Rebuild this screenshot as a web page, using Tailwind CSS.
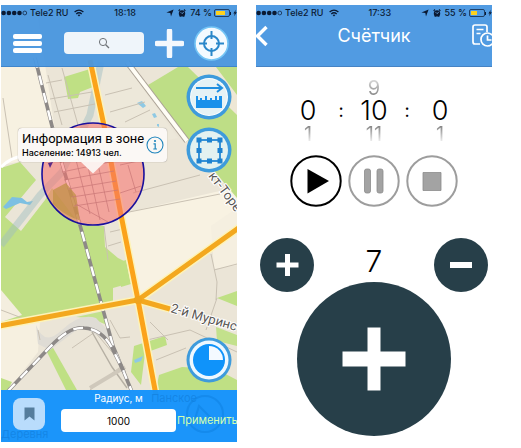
<!DOCTYPE html>
<html lang="ru">
<head>
<meta charset="utf-8">
<meta name="viewport" content="width=device-width, initial-scale=1">
<title>Счётчик</title>
<script src="https://cdn.jsdelivr.net/npm/@tailwindcss/browser@4"></script>
</head>
<body class="bg-white font-[Inter,Roboto,sans-serif] text-black">
<svg class="hidden" aria-hidden="true">
  <symbol id="dots" viewBox="0 0 27 8">
    <g fill="#0b1a33"><circle cx="2.6" cy="4" r="2.3"/><circle cx="7.9" cy="4" r="2.3"/><circle cx="13.2" cy="4" r="2.3"/><circle cx="18.5" cy="4" r="2.3"/></g>
    <circle cx="23.8" cy="4" r="1.9" fill="none" stroke="#0b1a33" stroke-width=".7"/>
  </symbol>
  <symbol id="wifi" viewBox="0 0 10 8">
    <g fill="none" stroke="#0b1a33" stroke-width="1.3"><path d="M.6 3.1Q5-.9 9.4 3.1"/><path d="M2.3 4.9Q5 2.5 7.7 4.9"/></g>
    <path d="M3.6 6.1Q5 5.1 6.4 6.1L5 7.6Z" fill="#0b1a33"/>
  </symbol>
  <symbol id="arrow" viewBox="0 0 8 8"><path d="M7.6.4 5 7.6 4.3 3.9.4 3.4Z" fill="#0b1a33"/></symbol>
  <symbol id="alarm" viewBox="0 0 8 8">
    <circle cx="4" cy="4.4" r="3.2" fill="#0b1a33"/><path d="M.6 1.8 2 .5M7.4 1.8 6 .5M1.8 7.6l.8-1M6.2 7.6l-.8-1" stroke="#0b1a33" stroke-width="1.1"/>
    <path d="M2.6 3.2 4 4.6l1.8-1.4" fill="none" stroke="#6aaae8" stroke-width=".8"/>
  </symbol>
  <symbol id="bolt" viewBox="0 0 5 8"><path d="M3.6 0 .4 4.5h1.8L1.4 8 4.8 3.2H2.9Z" fill="#0b1a33"/></symbol>
</svg>

<main class="grid min-h-screen grid-cols-2 gap-[19px] pt-[5px] pr-[29px] pb-[6px] pl-px">

  <section class="relative flex flex-col overflow-hidden" aria-label="Карта">
    <svg class="absolute inset-0 size-full" viewBox="1 5 236 437" preserveAspectRatio="xMidYMid slice" aria-hidden="true">
      <rect x="1" y="5" width="236" height="437" fill="#ebe5d7"/>
      <path d="M1 5H36L58 150 40 158 1 165Z" fill="#f7f1e1"/>
      <path d="M124 213 237 187V232L139 298Z" fill="#f8f2e2"/>
      <path d="M1 328 40 322 38 352 10 388H1Z" fill="#f6f0e0"/>
      <path d="M98 67H128L178 138 144 145 108 150Z" fill="#ede8da"/>
      <path d="M211 226 237 208V265L214 269Z" fill="#f5efe0"/>
      <path d="M1 168 20 162 36 180 30 187 5 217 21 231 45 200 52 188 80 225 104 226 105 247 118 258 126 262 127 284 113 288 113 303 1 324Z" fill="#c0df85"/>
      <path d="M1 290 22 315 1 322Z" fill="#f4eedf"/>
      <path d="M64 77 90 69 93 87 80 92 78 98 68 99Z" fill="#bfe084"/>
      <path d="M148 85 178 67H237V198L210 166 187 139Z" fill="#bede86"/>
      <path d="M188 67H216L237 95V115Z" fill="#eee7d5"/>
      <path d="M120 262 126 260 131 284 121 287Z" fill="#bfe084"/>
      <path d="M217 298 237 291V306Z" fill="#bfe084"/>
      <path d="M216 327 237 335V346L217 341Z" fill="#c3e18c"/>
      <path d="M134 346 165 336 167 345 145 353 141 385 131 372Z" fill="#bfe084"/>
      <path d="M159 375 182 367 216 369 237 380V390H156Z" fill="#bfe084"/>
      <path d="M46 350 52 346 77 390H66Z" fill="#bfe084"/>
      <path d="M1 378 12 382 8 390H1Z" fill="#bfe084"/>
      <path d="M76 317 104 311 107 325 90 318Z" fill="#c3e18c"/>
      <path d="M36 325Q44 347 62 330T96 318L112 335 104 340 82 326 50 350 38 344Z" fill="#dfdcd5"/>
      <path d="M3 207 12 197 22 198 27 202 33 201 30 205 20 203 6 209Z" fill="#7dc0e2"/>
      <path d="M137 103l5-2 4 5-3 2ZM152 114l3-1 2 4-3 1ZM134 360l9-4-2 5-6 2ZM157 124l2 0 0 3-2-1Z" fill="#8fc9e4"/>
      <path d="M1 245 40 195 62 172 90 115 101 62" fill="none" stroke="#9dbcc2" stroke-opacity=".45" stroke-width="7"/>
      <g fill="none" stroke="#c9c1b3" stroke-width="1">
        <path d="M48 75 62 125M62 68 78 125M50 99 92 92M46 83 62 80M54 112 95 104M3 98 12 158M110 112 145 102M125 122 150 110M105 95 132 88"/>
        <path d="M124 213 220 194M133 193 200 175M211 254 217 282 216 300M214 270 237 264M217 298 206 330M104 226 108 260M108 246 121 242M110 232 123 229"/>
        <path d="M147 340 190 330 237 352M156 360 186 348M150 322 168 340M110 320 120 338 130 337M38 330 40 340M1 310 22 318M72 348 95 332 123 365 90 390"/>
      </g>
      <path d="M92 332 112 367 127 388" fill="none" stroke="#b6b0a4" stroke-width="1.4"/>
      <path d="M90 388 125 367" stroke="#cfc8bb" stroke-width="4"/>
      <path d="M127 62 187 141" fill="none" stroke="#aaa195" stroke-width="6"/>
      <path d="M127 62 187 141" fill="none" stroke="#fffdf5" stroke-width="4"/>
      <path d="M1 167Q10 158 22 156L48 155" fill="none" stroke="#fff" stroke-width="3"/>
      <g fill="none">
        <path d="M35 58 48 110 58 150 80 225 102 306 113 346 132 392" stroke="#8d8987" stroke-width="3.6"/>
        <path d="M35 58 48 110 58 150 80 225 102 306 113 346 132 392" stroke="#fff" stroke-width="2.4" stroke-dasharray="10 8"/>
        <path d="M8 391 50 347Q70 326 84 328 102 329 112 348L124 372" stroke="#8d8987" stroke-width="3.6"/>
        <path d="M8 391 50 347Q70 326 84 328 102 329 112 348L124 372" stroke="#fff" stroke-width="2.4" stroke-dasharray="10 8"/>
      </g>
      <g fill="none" stroke="#fdf3b8" stroke-width="8">
        <path d="M90 60 106 135 120 210 138 300 156 395M-1 326 138 300 240 227M138 300 170 309"/>
      </g>
      <g fill="none" stroke="#f3a81f" stroke-width="5">
        <path d="M-1 326 138 300 240 227M138 300 170 309"/>
        <path d="M90 60 106 135 120 210 138 300 156 395" stroke="#fba31a"/>
      </g>
      <circle cx="138" cy="300" r="4" fill="#f0a41d"/>
      <circle cx="93" cy="174" r="51" fill="#f7706b" fill-opacity=".55"/>
      <path d="M53 190 66 183 76 195 80 221 96 224Q70 221 53 204Z" fill="#c09045" fill-opacity=".75"/>
      <path d="M48 163l5-1-3 6Z" fill="#5b2a86"/>
      <g fill="none" stroke="#c97676" stroke-width=".7">
        <path d="M62 172 110 162M64 180 114 171M68 189 116 181M72 197 118 190M74 206 120 199M76 160 90 214M86 158 100 220M97 160 109 212M76 204 108 222M120 165 143 160M120 193 141 186M128 165 136 192"/>
      </g>
      <circle cx="93" cy="174" r="51" fill="none" stroke="#1a0f9c" stroke-width="1.6"/>
      <g class="font-[Roboto,sans-serif]" fill="#5a5855" stroke="#fff" stroke-width="2" paint-order="stroke" font-size="13">
        <text x="170" y="312" transform="rotate(16 170 312)">2-й Муринс</text>
        <text x="208" y="176" transform="rotate(53 208 176)">кт-Торе</text>
      </g>
    </svg>

    <header class="relative flex h-[62px] flex-col border-b border-[#3f85cb] bg-[#4896df]/95">
      <div class="flex h-4 items-center text-[9px] leading-4 font-medium whitespace-nowrap text-[#0b1a33]">
        <svg class="h-2 w-[27px] shrink-0"><use href="#dots"/></svg>
        <span class="ml-0.5 w-[42px] shrink-0">Tele2 RU</span>
        <svg class="ml-0.5 h-2 w-2.5 shrink-0"><use href="#wifi"/></svg>
        <span class="flex-1 text-center">18:18</span>
        <svg class="mr-1 size-2 shrink-0"><use href="#arrow"/></svg>
        <svg class="mr-1 size-2 shrink-0"><use href="#alarm"/></svg>
        <span>74 %</span>
        <span class="ml-0.5 flex h-2 w-4 shrink-0 rounded-xs border border-[#0b1a33]/70 p-px"><span class="w-3/4 bg-[#ffd21c]"></span></span>
        <span class="mr-0.5 h-[3px] w-px bg-[#0b1a33]"></span>
        <svg class="h-2 w-1 shrink-0"><use href="#bolt"/></svg>
      </div>
      <div class="flex h-11 items-center justify-between pr-2 pl-3">
        <button aria-label="Меню" class="flex w-[29px] flex-col gap-0.5">
          <span class="h-[5px] rounded-xs bg-white"></span><span class="h-[5px] rounded-xs bg-white"></span><span class="h-[5px] rounded-xs bg-white"></span>
        </button>
        <label class="relative ml-3 block h-[22px] w-20 rounded-sm bg-[#eff5fa]">
          <input type="search" aria-label="Поиск" class="size-full bg-transparent outline-none">
          <svg class="absolute inset-0 m-auto size-3" viewBox="0 0 12 12" fill="none" stroke="#6f7478"><circle cx="5" cy="5" r="3.6"/><path d="M7.7 7.7 11 11" stroke-width="1.3"/></svg>
        </label>
        <button aria-label="Добавить"><svg class="size-[29px]" viewBox="0 0 29 29"><path d="M14.5 2v25M2 14.500h25" stroke="#f4f8fd" stroke-width="5.500" stroke-linecap="round"/></svg></button>
        <button aria-label="Моё местоположение"><svg class="size-[35px]" viewBox="0 0 35 35"><circle cx="17.5" cy="17.5" r="16.5" fill="#f4faff" stroke="#75c5f5" stroke-width="1.6"/><circle cx="17.500" cy="17.500" r="7.500" fill="none" stroke="#2a87ca" stroke-width="2"/><path d="M17.500 5v8M17.500 22v8M5 17.500h8M22 17.500h8" stroke="#2a87ca" stroke-width="2"/></svg></button>
      </div>
    </header>

    <div class="relative flex flex-1 flex-col items-end gap-[7px] pt-[7px] pr-[5px] pb-[7px]">
      <button aria-label="Линейка"><svg class="size-[46px]" viewBox="0 0 46 46"><circle cx="23" cy="23" r="22.5" fill="#3e9bdc"/><circle cx="23" cy="23" r="19" fill="#fff"/><circle cx="23" cy="23" r="18" fill="#e5f2f5"/><path d="M10 14H35M31 10l5 4-5 4" fill="none" stroke="#1f8fe0" stroke-width="2"/><path d="M10 22h2v4h2v-2h2v2h3v-4h2v4h3v-2h2v2h3v-4h2v4h2v-4h3v12H10Z" fill="#1a91ea"/></svg></button>
      <button aria-label="Область"><svg class="size-[46px]" viewBox="0 0 46 46"><circle cx="23" cy="23" r="22.5" fill="#3e9bdc"/><circle cx="23" cy="23" r="19" fill="#e3f1f0"/><rect x="13" y="13" width="21" height="21" fill="none" stroke="#2488d4" stroke-width="1.8"/><path d="M10.500 10.500h5v5h-5ZM21 10.500h5v5h-5ZM31.500 10.500h5v5h-5ZM10.500 21h5v5h-5ZM31.500 21h5v5h-5ZM10.500 31.500h5v5h-5ZM21 31.500h5v5h-5ZM31.500 31.500h5v5h-5Z" fill="#1e82d0"/></svg></button>
      <button aria-label="Время" class="mt-auto"><svg class="size-[46px]" viewBox="0 0 46 46"><circle cx="23" cy="23" r="22.500" fill="#3e9bdc"/><circle cx="23" cy="23" r="19.500" fill="#eef8ff"/><circle cx="23" cy="23" r="16" fill="#0f93fa"/><path d="M23 23V9A14 14 0 0 1 37 23Z" fill="#f4faff"/></svg></button>

      <div class="absolute top-[61px] left-[17px] flex h-[34px] items-center rounded-sm bg-[#fbf8f5] pr-[3px] pl-1 whitespace-nowrap shadow-[0_0_1px_#00000088]">
        <div>
          <p class="font-[Roboto,sans-serif] text-[13px] leading-4">Информация в зоне</p>
          <p class="text-[9px] leading-3 font-medium">Население: 14913 чел.</p>
        </div>
        <button aria-label="Подробнее" class="ml-0.5"><svg class="size-[18px]" viewBox="0 0 18 18"><circle cx="9" cy="9" r="8" fill="none" stroke="#1f85bd" stroke-width="1.1"/><circle cx="9" cy="5" r="1.1" fill="#1f85bd"/><path d="M7.500 7.800H9.200V13M7.300 13h3.700" fill="none" stroke="#1f85bd" stroke-width="1.200"/></svg></button>
        <svg class="absolute top-full left-[63px] h-3 w-6" viewBox="0 0 24 12"><path d="M0 0H24L12 11.500Z" fill="#fbf1ee"/></svg>
      </div>
    </div>

    <form class="relative flex h-[52px] items-start bg-[#1492fb]/97 pl-3">
      <div class="pointer-events-none absolute inset-0 flex flex-col justify-between text-[11px] leading-4 text-[#0d76d2]/50">
        <span class="self-end pr-10">Панское</span>
        <span>Деревня</span>
      </div>
      <svg class="pointer-events-none absolute top-1 right-3 size-10" viewBox="0 0 40 40" fill="none" stroke="#0d7fe0" stroke-opacity=".5" stroke-width="2"><circle cx="20" cy="20" r="18"/><path d="M14 12 28 26 10 25Z"/></svg>
      <button type="button" aria-label="Закладка" class="relative mt-2 flex size-8 shrink-0 items-center justify-center rounded-lg bg-[#b9dcfc]"><svg class="h-[14px] w-[11px]" viewBox="0 0 11 14"><path d="M.5.500h10V13.500L5.500 9.500.5 13.500Z" fill="#557d9d"/></svg></button>
      <div class="relative ml-4 flex min-w-0 flex-1 flex-col">
        <label for="radius" class="text-center text-[10px] leading-4 text-white">Радиус, м</label>
        <input id="radius" value="1000" class="mt-[3px] h-[23px] w-full rounded-sm bg-white text-center text-[10px] outline-none">
      </div>
      <button type="button" class="relative mt-[19px] w-[61px] shrink-0 overflow-hidden pl-px text-left text-[11px] leading-[23px] whitespace-nowrap text-[#d3ffb0]">Применить</button>
    </form>
  </section>

  <section class="flex flex-col overflow-hidden" aria-label="Счётчик">
    <header class="flex h-[62px] shrink-0 flex-col border-b border-[#4683c4] bg-[#519be2]">
      <div class="flex h-4 items-center text-[9px] leading-4 font-medium whitespace-nowrap text-[#0b1a33]">
        <svg class="h-2 w-[27px] shrink-0"><use href="#dots"/></svg>
        <span class="ml-0.5 w-[42px] shrink-0">Tele2 RU</span>
        <svg class="ml-0.5 h-2 w-2.5 shrink-0"><use href="#wifi"/></svg>
        <span class="flex-1 text-center">17:33</span>
        <svg class="mr-1 size-2 shrink-0"><use href="#arrow"/></svg>
        <svg class="mr-1 size-2 shrink-0"><use href="#alarm"/></svg>
        <span>55 %</span>
        <span class="ml-0.5 flex h-2 w-4 shrink-0 rounded-xs border border-[#0b1a33]/70 p-px"><span class="w-1/2 bg-[#ffd21c]"></span></span>
        <span class="mr-0.5 h-[3px] w-px bg-[#0b1a33]"></span>
        <svg class="h-2 w-1 shrink-0"><use href="#bolt"/></svg>
      </div>
      <div class="flex h-[30px] items-center justify-between">
        <button aria-label="Назад" class="w-5"><svg class="h-[22px] w-3" viewBox="0 0 12 22"><path d="M10.500 2 1.500 11l9 9" fill="none" stroke="#fff" stroke-width="3.400"/></svg></button>
        <h1 class="text-[18px] leading-6 text-white">Счётчик</h1>
        <button aria-label="История" class="w-5"><svg class="h-6 w-5" viewBox="0 0 20 24" fill="none" stroke="#fff" stroke-width="1.700"><path d="M8 20H3Q1 20 1 18V3Q1 1 3 1H13Q15 1 15 3V8M4.500 5.500h7M4.500 9.500h4"/><circle cx="15.500" cy="15.500" r="6.500"/><path d="M15.500 11.500v4.500h4"/></svg></button>
      </div>
    </header>

    <div class="mt-[11px] grid grid-cols-[repeat(5,33px)] justify-center gap-y-px text-center text-[20px] leading-5">
      <span class="col-start-3 bg-linear-to-b from-[#777]/20 to-[#777] bg-clip-text text-transparent">9</span>
      <span class="col-start-1 row-start-2 text-[27px] leading-6 font-light">0</span>
      <span class="row-start-2 text-[18px] leading-6">:</span>
      <span class="row-start-2 text-[27px] leading-6 font-light">10</span>
      <span class="row-start-2 text-[18px] leading-6">:</span>
      <span class="row-start-2 text-[27px] leading-6 font-light">0</span>
      <span class="col-start-1 row-start-3 bg-linear-to-b from-[#777] to-transparent bg-clip-text text-transparent">1</span>
      <span class="col-start-3 row-start-3 bg-linear-to-b from-[#777] to-transparent bg-clip-text text-transparent">11</span>
      <span class="col-start-5 row-start-3 bg-linear-to-b from-[#777] to-transparent bg-clip-text text-transparent">1</span>
    </div>

    <div class="mt-[11px] flex justify-center gap-1.5">
      <button aria-label="Старт"><svg class="size-[52px]" viewBox="0 0 52 52"><circle cx="26" cy="26" r="24.700" fill="none" stroke="#000" stroke-width="2"/><path d="M17.500 14 39 26 17.500 38.500Z"/></svg></button>
      <button aria-label="Пауза"><svg class="size-[52px]" viewBox="0 0 52 52"><circle cx="26" cy="26" r="24.700" fill="none" stroke="#9d9d9d" stroke-width="2"/><g fill="#a3a3a3" stroke="#8c8c8c" stroke-width=".8"><rect x="16.500" y="14" width="6" height="24" rx="2"/><rect x="29" y="14" width="6" height="24" rx="2"/></g></svg></button>
      <button aria-label="Стоп"><svg class="size-[52px]" viewBox="0 0 52 52"><circle cx="26" cy="26" r="24.700" fill="none" stroke="#9d9d9d" stroke-width="2"/><path d="M17 17.500h18v18H17Z" fill="#a3a3a3" stroke="#8c8c8c" stroke-width=".8"/></svg></button>
    </div>

    <div class="mt-[31px] flex items-center justify-between px-1">
      <button aria-label="Прибавить" class="rounded-full bg-[#273f49]"><svg class="size-[54px]" viewBox="0 0 54 54"><path d="M27.500 16v22M16.500 27h22" stroke="#fff" stroke-width="5"/></svg></button>
      <output class="pb-2 text-[30px] leading-8 font-light">7</output>
      <button aria-label="Убавить" class="rounded-full bg-[#273f49]"><svg class="size-[54px]" viewBox="0 0 54 54"><path d="M16 27h22" stroke="#fff" stroke-width="6"/></svg></button>
    </div>
    <button aria-label="Прибавить один" class="-mt-2.5 self-center rounded-full bg-[#273f49]"><svg class="size-[154px]" viewBox="0 0 154 154"><path d="M77 45.500v63" stroke="#fff" stroke-width="13"/><path d="M45.500 77h63" stroke="#fff" stroke-width="15"/></svg></button>
  </section>
</main>
</body>
</html>
